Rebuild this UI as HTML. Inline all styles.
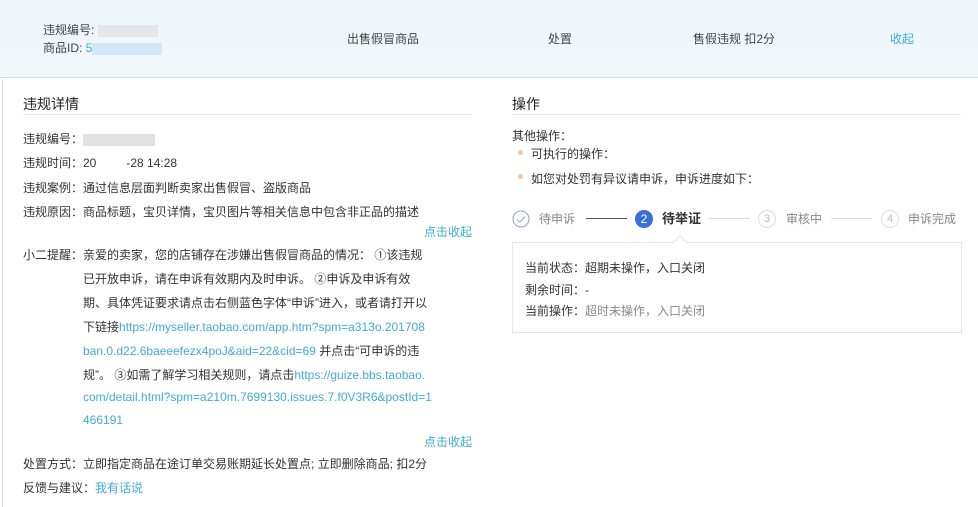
<!DOCTYPE html>
<html><head><meta charset="utf-8"><style>
*{margin:0;padding:0;box-sizing:border-box}
body{width:978px;height:507px;overflow:hidden;background:#fff;font-family:"Liberation Sans","Noto Sans CJK SC",sans-serif;font-size:12px;color:#333;position:relative}
.a{position:absolute;white-space:nowrap}
.l{color:#3fabd8}
.g{color:#888}
</style></head><body>
<div class="a" style="left:0;top:0;width:978px;height:78px;background:linear-gradient(#eef5fc,#f2f9fb);border-bottom:1px solid #dcdcdc"></div>
<div class="a" style="left:43px;top:21px;color:#444">违规编号: <span style="display:inline-block;width:60px;height:12px;background:#e4e6ea;vertical-align:middle"></span></div>
<div class="a" style="left:43px;top:39px;color:#444">商品ID: <span class="l">5</span><span style="display:inline-block;width:70px;height:12px;background:#cfe8f6;vertical-align:middle"></span></div>
<div class="a" style="left:347px;top:30px;color:#444">出售假冒商品</div>
<div class="a" style="left:548px;top:30px;color:#444">处置</div>
<div class="a" style="left:693px;top:30px;color:#444">售假违规 扣2分</div>
<div class="a l" style="left:890px;top:30px">收起</div>
<div class="a" style="left:2px;top:79px;width:1px;height:428px;background:#ddd"></div>

<div class="a" style="left:23px;top:94px;font-size:14px;color:#222">违规详情</div>
<div class="a" style="left:23px;top:114px;width:449px;height:1px;background:#e8e8e8"></div>
<div class="a" style="left:23px;top:130px">违规编号：<span style="display:inline-block;width:72px;height:12px;background:#e2e2e2;vertical-align:middle"></span></div>
<div class="a" style="left:23px;top:154px">违规时间：20<span style="display:inline-block;width:30px"></span>-28 14:28</div>
<div class="a" style="left:23px;top:179px">违规案例：通过信息层面判断卖家出售假冒、盗版商品</div>
<div class="a" style="left:23px;top:203px">违规原因：商品标题，宝贝详情，宝贝图片等相关信息中包含非正品的描述</div>
<div class="a l" style="left:424px;top:223px">点击收起</div>
<div class="a" style="left:23px;top:246px">小二提醒：亲爱的卖家，您的店铺存在涉嫌出售假冒商品的情况： ①该违规</div>
<div class="a" style="left:83px;top:270px">已开放申诉，请在申诉有效期内及时申诉。 ②申诉及申诉有效</div>
<div class="a" style="left:83px;top:294px">期、具体凭证要求请点击右侧蓝色字体“申诉”进入，或者请打开以</div>
<div class="a" style="left:83px;top:318px">下链接<span class="l">https://myseller.taobao.com/app.htm?spm=a313o.201708</span></div>
<div class="a" style="left:83px;top:342px"><span class="l">ban.0.d22.6baeeefezx4poJ&amp;aid=22&amp;cid=69</span> 并点击“可申诉的违</div>
<div class="a" style="left:83px;top:366px">规”。 ③如需了解学习相关规则，请点击<span class="l">https://guize.bbs.taobao.</span></div>
<div class="a l" style="left:83px;top:390px">com/detail.html?spm=a210m.7699130.issues.7.f0V3R6&amp;postId=1</div>
<div class="a l" style="left:83px;top:413px">466191</div>
<div class="a l" style="left:424px;top:433px">点击收起</div>
<div class="a" style="left:23px;top:455px">处置方式：立即指定商品在途订单交易账期延长处置点; 立即删除商品; 扣2分</div>
<div class="a" style="left:23px;top:479px">反馈与建议：<span class="l">我有话说</span></div>

<div class="a" style="left:512px;top:94px;font-size:14px;color:#222">操作</div>
<div class="a" style="left:512px;top:114px;width:449px;height:1px;background:#e8e8e8"></div>
<div class="a" style="left:512px;top:127px">其他操作：</div>
<div class="a" style="left:518px;top:150px;width:5px;height:5px;border-radius:50%;background:#f0c9a0"></div>
<div class="a" style="left:531px;top:145px">可执行的操作：</div>
<div class="a" style="left:518px;top:174px;width:5px;height:5px;border-radius:50%;background:#f0c9a0"></div>
<div class="a" style="left:531px;top:170px">如您对处罚有异议请申诉，申诉进度如下：</div>

<svg class="a" style="left:512px;top:210px" width="18" height="18"><circle cx="9" cy="9" r="8" fill="none" stroke="#8fa3c9" stroke-width="1"/><path d="M5 9.5l2.8 2.6L13 6.5" fill="none" stroke="#8fa3c9" stroke-width="1"/></svg>
<div class="a g" style="left:539px;top:211px;line-height:16px">待申诉</div>
<div class="a" style="left:586px;top:218px;width:41px;height:1px;background:#456"></div>
<div class="a" style="left:635px;top:210px;width:18px;height:18px;border-radius:50%;background:#3a6fd8;color:#fff;text-align:center;line-height:18px;font-size:12px">2</div>
<div class="a" style="left:662px;top:211px;line-height:16px;font-size:13px;font-weight:bold;color:#333">待举证</div>
<div class="a" style="left:709px;top:218px;width:41px;height:1px;background:#ddd"></div>
<div class="a" style="left:758px;top:210px;width:18px;height:18px;border-radius:50%;border:1px solid #ddd;color:#bbb;text-align:center;line-height:16px;font-size:11px">3</div>
<div class="a g" style="left:786px;top:211px;line-height:16px">审核中</div>
<div class="a" style="left:831px;top:218px;width:41px;height:1px;background:#ddd"></div>
<div class="a" style="left:881px;top:210px;width:18px;height:18px;border-radius:50%;border:1px solid #ddd;color:#bbb;text-align:center;line-height:16px;font-size:11px">4</div>
<div class="a g" style="left:908px;top:211px;line-height:16px">申诉完成</div>

<div class="a" style="left:512px;top:242px;width:450px;height:91px;border:1px solid #e5e5e5"></div>
<div class="a" style="left:675px;top:237px;width:10px;height:10px;background:#fff;border-left:1px solid #e5e5e5;border-top:1px solid #e5e5e5;transform:rotate(45deg)"></div>
<div class="a" style="left:525px;top:259px">当前状态：超期未操作，入口关闭</div>
<div class="a" style="left:525px;top:281px">剩余时间：-</div>
<div class="a" style="left:525px;top:302px">当前操作：<span class="g">超时未操作，入口关闭</span></div>
</body></html>
